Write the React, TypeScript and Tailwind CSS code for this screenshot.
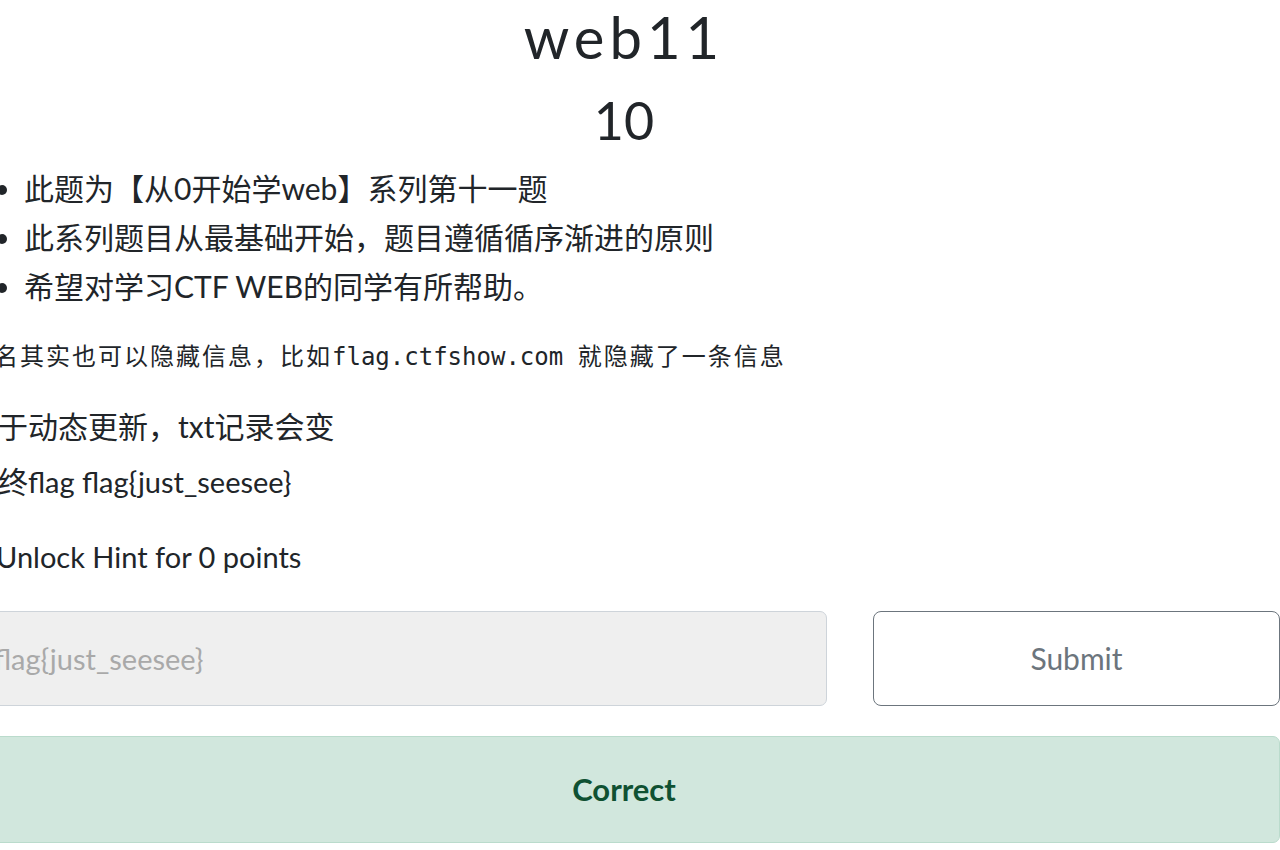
import React from 'react'

const bullets = [
  '此题为【从0开始学web】系列第十一题',
  '此系列题目从最基础开始，题目遵循循序渐进的原则',
  '希望对学习CTF WEB的同学有所帮助。',
]

export default function App() {
  return (
    <div className="w-[1280px] h-[850px] overflow-hidden bg-white">
      <div className="ml-[-32px] w-[1312px] text-[#212529] font-['Lato','Noto_Sans_CJK_SC',sans-serif]">
        {/* Challenge header */}
        <h2 className="pt-[2px] text-center text-[58px] leading-[1.2] tracking-[5px] font-normal">web11</h2>
        <h4 className="mt-[17px] text-center text-[52px] leading-[1.2] font-normal">10</h4>

        {/* Description */}
        <ul className="mt-[13px] pl-[56px] list-disc text-[30px] leading-[49px]">
          {bullets.map((b) => (
            <li key={b}>{b}</li>
          ))}
        </ul>

        <p className="mt-[25px] text-[24px] leading-[42px] font-['DejaVu_Sans_Mono','Noto_Sans_CJK_SC',monospace]">
          <span className="tracking-[2px]">域名其实也可以隐藏信息，比如</span>
          flag.ctfshow.com <span className="tracking-[2px]">就隐藏了一条信息</span>
        </p>

        <p className="mt-[24px] text-[30px] leading-[49px]">由于动态更新，txt记录会变</p>
        <p className="mt-[6px] text-[30px] leading-[49px]">
          最终<span className="text-[29px]">flag flag{'{'}just_seesee{'}'}</span>
        </p>

        {/* Hint */}
        <div className="mt-[26px] flex items-center text-[29px] leading-[49px]">
          <span className="w-[28px] text-[18px]">▶</span>
          <span>Unlock Hint for 0 points</span>
        </div>

        {/* Submission */}
        <div className="mt-[30px] flex gap-[46px]">
          <input
            readOnly
            placeholder="flag{just_seesee}"
            className="w-[859px] h-[95px] px-[25px] rounded-[7px] border border-[#ced4da] bg-[#efefef] text-[29px] placeholder:text-[#a9a9a9] outline-none"
          />
          <button className="w-[407px] h-[95px] rounded-[8px] border border-[#6c757d] bg-white text-[30px] text-[#6c757d]">
            Submit
          </button>
        </div>

        <div className="mt-[30px] h-[107px] flex items-center justify-center rounded-[7px] border border-[#badbcc] bg-[#d1e7dd] text-[31px] font-bold text-[#0f5132]">
          Correct
        </div>
      </div>
    </div>
  )
}
